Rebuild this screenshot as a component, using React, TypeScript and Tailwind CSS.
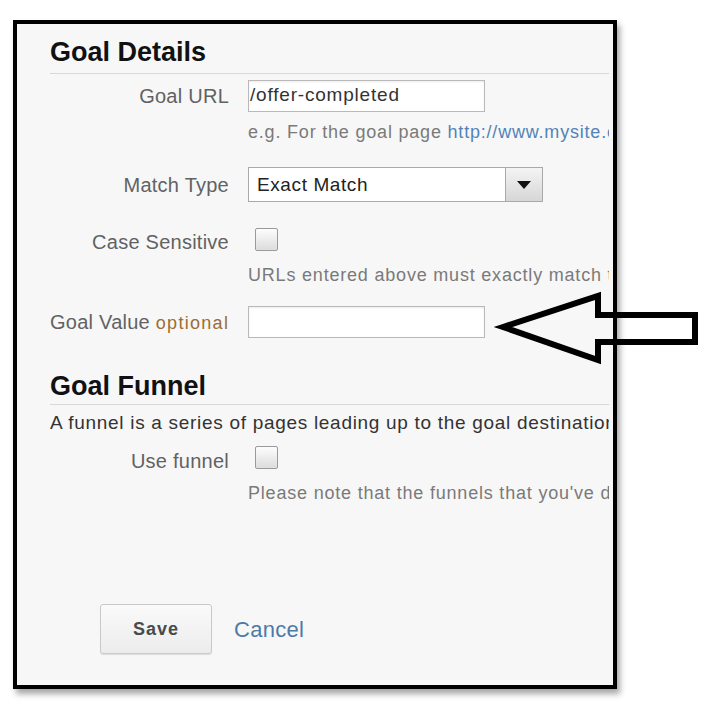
import React from 'react';

const font = { fontFamily: '"Liberation Sans", Arial, sans-serif' };

function Label({ children }: { children: React.ReactNode }) {
  return (
    <div className="w-[179px] shrink-0 text-right text-[20px] leading-[22px] whitespace-nowrap text-[#626262] tracking-[0.25px]">
      {children}
    </div>
  );
}

function Checkbox() {
  return (
    <div className="w-[23px] h-[23px] border border-[#9a9a9a] rounded-[2px] bg-gradient-to-b from-[#fdfdfd] to-[#dcdcdc] shadow-[inset_0_0_1px_#fff]" />
  );
}

function Hint({ children }: { children: React.ReactNode }) {
  return (
    <div className="ml-[198px] text-[18px] leading-[20px] whitespace-nowrap text-[#7a7a7a] tracking-[0.8px]">{children}</div>
  );
}

export default function App() {
  return (
    <div className="relative w-[716px] h-[710px] bg-white overflow-hidden" style={font}>
      <div className="ml-[13px] mt-[20px] w-[604px] h-[669px] border-4 border-black bg-[#f7f7f7] shadow-[3px_5px_6px_rgba(0,0,0,0.35)] overflow-hidden">
        <div className="mr-[4px] h-full overflow-hidden">
          <div className="pl-[33px] pt-[13px] w-[760px]">
            <h2 className="text-[27px] leading-[30px] font-bold text-[#111]">Goal Details</h2>
            <div className="mt-[6px] w-[563px] border-t border-[#d8d8d8]" />

            <div className="mt-[6px] flex items-center gap-[19px]">
              <Label>Goal URL</Label>
              <div className="w-[237px] h-[32px] border border-[#b9b9b9] bg-white pl-[1px] text-[19px] leading-[28px] text-[#333] tracking-[0.8px] shadow-[inset_0_1px_2px_rgba(0,0,0,0.08)]">
                /offer-completed
              </div>
            </div>
            <div className="mt-[10px]">
              <Hint>
                e.g. For the goal page <span className="text-[#5283b8]">http://www.mysite.com/thankyou.html</span>
              </Hint>
            </div>

            <div className="mt-[25px] flex items-center gap-[19px]">
              <Label>Match Type</Label>
              <div className="w-[295px] h-[35px] flex border border-[#a9a9a9] bg-white">
                <div className="flex-1 pl-[8px] text-[19px] leading-[33px] text-[#222] tracking-[0.6px]">Exact Match</div>
                <div className="w-[37px] h-full border-l border-[#a9a9a9] bg-gradient-to-b from-[#f4f4f4] to-[#d6d6d6] flex items-center justify-center">
                  <svg width="16" height="10" viewBox="0 0 16 10">
                    <path d="M1 1 L15 1 L8 9 Z" fill="#111" />
                  </svg>
                </div>
              </div>
            </div>

            <div className="mt-[26px] flex items-start gap-[26px]">
              <div className="mt-[3px]">
                <Label>Case Sensitive</Label>
              </div>
              <Checkbox />
            </div>
            <div className="mt-[12px]">
              <Hint>URLs entered above must exactly match the capitalization of visited URLs.</Hint>
            </div>

            <div className="mt-[21px] flex items-center gap-[19px]">
              <Label>
                Goal Value <span className="text-[18px] text-[#9b6d35] tracking-[1.3px]">optional</span>
              </Label>
              <div className="w-[237px] h-[32px] border border-[#b9b9b9] bg-white shadow-[inset_0_1px_2px_rgba(0,0,0,0.08)]" />
            </div>

            <h2 className="mt-[33px] text-[27px] leading-[30px] font-bold text-[#111]">Goal Funnel</h2>
            <div className="mt-[3px] w-[563px] border-t border-[#d8d8d8]" />
            <div className="mt-[7px] text-[19px] leading-[22px] whitespace-nowrap text-[#333] tracking-[0.7px]">
              A funnel is a series of pages leading up to the goal destination. For example, the funnel may include steps
            </div>

            <div className="mt-[12px] flex items-start gap-[26px]">
              <div className="mt-[4px]">
                <Label>Use funnel</Label>
              </div>
              <Checkbox />
            </div>
            <div className="mt-[11px]">
              <Hint>Please note that the funnels that you've defined here only apply to the Funnel Visualization report.</Hint>
            </div>

            <div className="mt-[101px] ml-[50px] flex items-center gap-[22px]">
              <button className="w-[112px] h-[50px] rounded-[3px] border border-[#c9c9c9] bg-gradient-to-b from-[#fafafa] to-[#ececec] shadow-[0_1px_1px_rgba(0,0,0,0.1)] text-[18px] font-bold text-[#4a4a4a] tracking-[1px]">
                Save
              </button>
              <span className="text-[22px] text-[#4d7aa8] tracking-[0.3px]">Cancel</span>
            </div>
          </div>
        </div>
      </div>

      <svg className="absolute left-0 top-0 pointer-events-none" width="716" height="710">
        <path
          d="M503 327 L598 296 L598 315 L695 315 L695 342 L598 342 L598 360 Z"
          fill="none"
          stroke="#000"
          strokeWidth="6"
          strokeLinejoin="miter"
        />
      </svg>
    </div>
  );
}
